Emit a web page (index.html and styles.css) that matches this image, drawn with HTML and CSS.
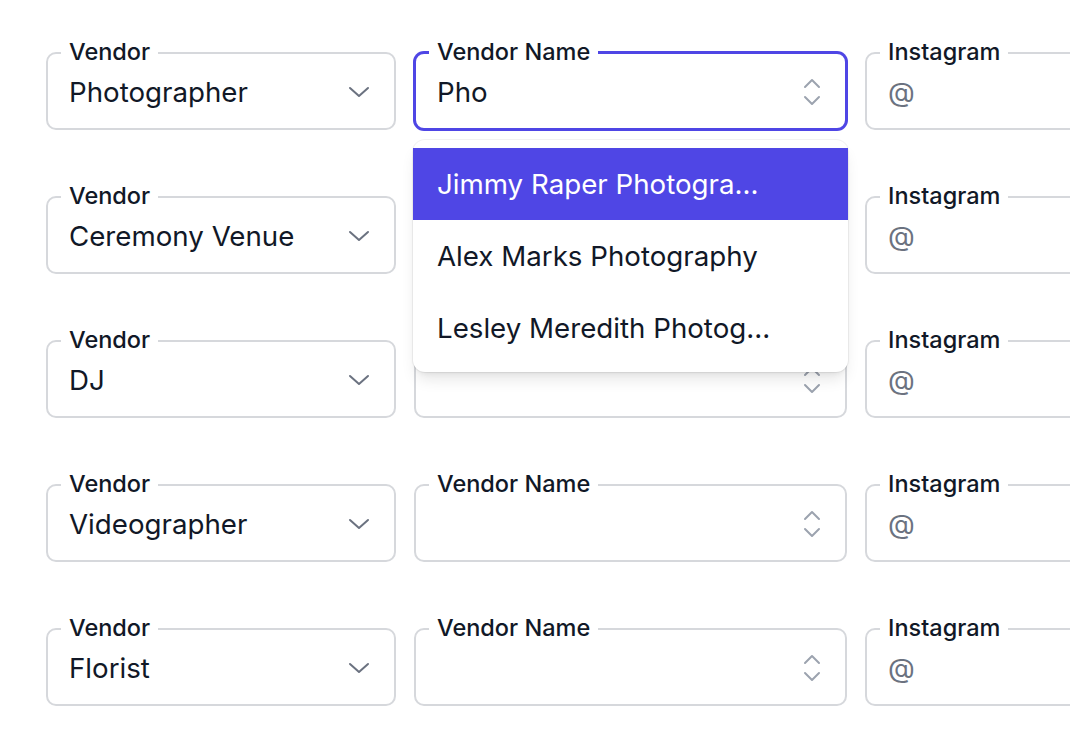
FILE: index.html
```html
<!DOCTYPE html>
<html lang="en">
<head>
<meta charset="utf-8">
<title>Vendors</title>
<link rel="stylesheet" href="styles.css">
</head>
<body>
<main class="rows">
  <div class="row">
    <div class="field">
      <span class="label">Vendor</span>
      <span class="value">Photographer</span>
      <svg class="chev" width="22" height="12" viewBox="0 0 22 12"><polyline points="2,2 11,10 20,2"/></svg>
    </div>
    <div class="field focused">
      <span class="label">Vendor Name</span>
      <span class="value">Pho</span>
      <svg class="updown" width="18" height="28" viewBox="0 0 18 28"><polyline points="2,9 9,2 16,9"/><polyline points="2,19 9,26 16,19"/></svg>
      <ul class="options">
        <li class="option active">Jimmy Raper Photogra...</li>
        <li class="option">Alex Marks Photography</li>
        <li class="option">Lesley Meredith Photog...</li>
      </ul>
    </div>
    <div class="field">
      <span class="label">Instagram</span>
      <span class="value muted">@</span>
    </div>
  </div>

  <div class="row">
    <div class="field">
      <span class="label">Vendor</span>
      <span class="value">Ceremony Venue</span>
      <svg class="chev" width="22" height="12" viewBox="0 0 22 12"><polyline points="2,2 11,10 20,2"/></svg>
    </div>
    <div class="field">
      <span class="label">Vendor Name</span>
      <span class="value"></span>
      <svg class="updown" width="18" height="28" viewBox="0 0 18 28"><polyline points="2,9 9,2 16,9"/><polyline points="2,19 9,26 16,19"/></svg>
    </div>
    <div class="field">
      <span class="label">Instagram</span>
      <span class="value muted">@</span>
    </div>
  </div>

  <div class="row">
    <div class="field">
      <span class="label">Vendor</span>
      <span class="value">DJ</span>
      <svg class="chev" width="22" height="12" viewBox="0 0 22 12"><polyline points="2,2 11,10 20,2"/></svg>
    </div>
    <div class="field">
      <span class="label">Vendor Name</span>
      <span class="value"></span>
      <svg class="updown" width="18" height="28" viewBox="0 0 18 28"><polyline points="2,9 9,2 16,9"/><polyline points="2,19 9,26 16,19"/></svg>
    </div>
    <div class="field">
      <span class="label">Instagram</span>
      <span class="value muted">@</span>
    </div>
  </div>

  <div class="row">
    <div class="field">
      <span class="label">Vendor</span>
      <span class="value">Videographer</span>
      <svg class="chev" width="22" height="12" viewBox="0 0 22 12"><polyline points="2,2 11,10 20,2"/></svg>
    </div>
    <div class="field">
      <span class="label">Vendor Name</span>
      <span class="value"></span>
      <svg class="updown" width="18" height="28" viewBox="0 0 18 28"><polyline points="2,9 9,2 16,9"/><polyline points="2,19 9,26 16,19"/></svg>
    </div>
    <div class="field">
      <span class="label">Instagram</span>
      <span class="value muted">@</span>
    </div>
  </div>

  <div class="row">
    <div class="field">
      <span class="label">Vendor</span>
      <span class="value">Florist</span>
      <svg class="chev" width="22" height="12" viewBox="0 0 22 12"><polyline points="2,2 11,10 20,2"/></svg>
    </div>
    <div class="field">
      <span class="label">Vendor Name</span>
      <span class="value"></span>
      <svg class="updown" width="18" height="28" viewBox="0 0 18 28"><polyline points="2,9 9,2 16,9"/><polyline points="2,19 9,26 16,19"/></svg>
    </div>
    <div class="field">
      <span class="label">Instagram</span>
      <span class="value muted">@</span>
    </div>
  </div>
</main>
</body>
</html>
```

FILE: styles.css
```css
html, body {
  margin: 0;
  padding: 0;
  background: #ffffff;
  overflow: hidden;
}

body {
  width: 1070px;
  height: 754px;
  font-family: Inter, "Noto Sans", "Liberation Sans", sans-serif;
  color: #111827;
}

.rows {
  display: flex;
  flex-direction: column;
  gap: 66px;
  padding: 52px 0 0 46px;
}

.row {
  display: grid;
  grid-template-columns: 350px 433px 433px;
  gap: 18px;
}

.field {
  position: relative;
  box-sizing: border-box;
  height: 78px;
  border: 2px solid #d6d8dc;
  border-radius: 10px;
  padding: 2px 24px 0 21px;
  display: flex;
  align-items: center;
  justify-content: space-between;
  background: #ffffff;
}

.field.focused {
  border-color: #4f46e5;
  box-shadow: 0 0 0 1px #4f46e5;
  z-index: 5;
}

.label {
  position: absolute;
  top: -16px;
  left: 13px;
  padding: 0 8px;
  background: #ffffff;
  font-size: 23.5px;
  line-height: 28px;
  font-weight: 500;
  color: #111827;
}

.value {
  font-size: 27.7px;
  line-height: 32px;
  color: #111827;
}

.value.muted {
  color: #6b7280;
}

.chev polyline,
.updown polyline {
  fill: none;
  stroke-width: 2;
  stroke-linecap: round;
  stroke-linejoin: round;
}

.chev polyline {
  stroke: #6b7280;
}

.updown polyline {
  stroke: #9ca3af;
}

.options {
  position: absolute;
  top: calc(100% + 12px);
  left: -3px;
  right: -3px;
  margin: 0;
  padding: 8px 0;
  list-style: none;
  background: #ffffff;
  border-radius: 12px;
  box-shadow: 0 10px 15px -3px rgba(0, 0, 0, 0.1), 0 4px 6px -4px rgba(0, 0, 0, 0.1), 0 0 0 1px rgba(0, 0, 0, 0.05);
}

.option {
  height: 72px;
  line-height: 72px;
  padding: 0 72px 0 24px;
  font-size: 27.7px;
  color: #111827;
  white-space: nowrap;
  overflow: hidden;
}

.option.active {
  background: #4f46e5;
  color: #ffffff;
}
```
